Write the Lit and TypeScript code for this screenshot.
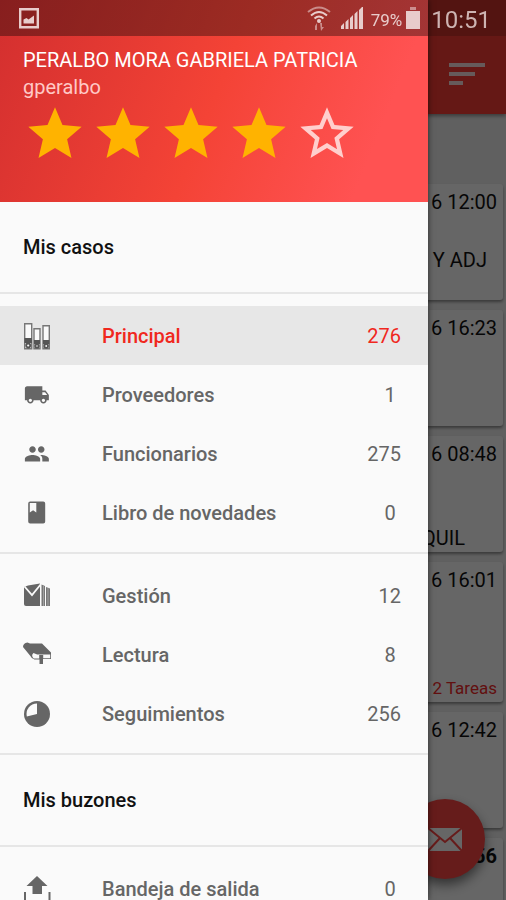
import { LitElement, html, css, svg, nothing } from "lit";
import { customElement, property } from "lit/decorators.js";
import { classMap } from "lit/directives/class-map.js";

const icons: Record<string, unknown> = {
  binders: svg`<g fill="#fafafa" stroke="#777" stroke-width="1.400">
    <path d="M1.700 1.700h7v25h-7zM11 6.700h6v20h-6zM20 3.700h6.300v23H20z"/></g>
    <path fill="#555" d="M1.500 16h7.400v5H1.500zM11 18h6v4h-6zM20 18h6.300v4H20z"/>
    <g fill="none" stroke="#555" stroke-width="1.800"><circle cx="5.200" cy="23.500" r="2"/><circle cx="14" cy="24" r="1.700"/><circle cx="23.200" cy="24" r="1.800"/></g>`,
  truck: svg`<path transform="translate(.8 .8) scale(1.090)" fill="#666" d="M20 8h-3V4H3c-1.100 0-2 .9-2 2v11h2c0 1.660 1.340 3 3 3s3-1.340 3-3h6c0 1.660 1.340 3 3 3s3-1.340 3-3h2v-5l-3-4zM6 18.500c-.83 0-1.500-.67-1.500-1.500s.67-1.500 1.500-1.500 1.500.67 1.500 1.500-.67 1.500-1.500 1.500zm13.500-9l1.960 2.500H17V9.500h2.500zm-1.500 9c-.83 0-1.500-.67-1.500-1.500s.67-1.500 1.500-1.500 1.500.67 1.500 1.500-.67 1.500-1.500 1.500z"/>`,
  people: svg`<path transform="translate(.8 .8) scale(1.090)" fill="#666" d="M16 11c1.660 0 2.990-1.340 2.990-3S17.660 5 16 5s-3 1.340-3 3 1.340 3 3 3zm-8 0c1.660 0 2.990-1.340 2.990-3S9.660 5 8 5 5 6.340 5 8s1.340 3 3 3zm0 2c-2.330 0-7 1.170-7 3.500V19h14v-2.500c0-2.330-4.670-3.500-7-3.500zm8 0c-.29 0-.62.02-.97.05 1.160.84 1.970 1.970 1.970 3.450V19h6v-2.500c0-2.330-4.670-3.500-7-3.500z"/>`,
  book: svg`<path fill="#666" d="M7.200 2.500h13a2 2 0 0 1 2 2v18a2 2 0 0 1-2 2h-13a2 2 0 0 1-2-2v-18a2 2 0 0 1 2-2z"/><path fill="#fafafa" d="M6.800 4h6.500v9.500l-3.200-2.200-3.300 2.200z"/>`,
  mail: svg`<path fill="#666" d="M1 5l4-1.500L17 1.500v22.500H3q-2 0-2-2z"/><path fill="none" stroke="#fafafa" stroke-width="1.800" d="M1.500 4.500L9 13 18 2"/><path fill="#777" d="M18.500 2.500l3.500 1.500v20h-3.500zM23 5l4 1.500V24h-4z"/><path stroke="#aaa" stroke-width=".8" d="M20.500 4v20M25 6v18"/>`,
  reading: svg`<path fill="#666" d="M0 6q0-4 4.500-4.500L7 2.500h12L28.500 12v6H20v5h-3.500v-4.500h-5Q8 17 7 14.500z"/><path fill="#fafafa" d="M10.500 12q-2.800 2.500.2 5.500h5.500v-3.500h4v3.200h7V13.500h-13z"/>`,
  pie: svg`<circle cx="14" cy="14" r="13" fill="#666"/><path fill="#fafafa" d="M14 14V3.500A10.500 10.500 0 0 0 3.800 16.500z"/>`,
  outbox: svg`<path fill="#666" d="M14 1l10.500 10H19v8H9.500v-8H3.500zM1 17h2v8h22.500v-8h2v10H1z"/>`,
};

interface Item { icon: string; label: string; count: number; active?: boolean }

const cases: Item[] = [
  { icon: "binders", label: "Principal", count: 276, active: true },
  { icon: "truck", label: "Proveedores", count: 1 },
  { icon: "people", label: "Funcionarios", count: 275 },
  { icon: "book", label: "Libro de novedades", count: 0 },
];
const tracking: Item[] = [
  { icon: "mail", label: "Gestión", count: 12 },
  { icon: "reading", label: "Lectura", count: 8 },
  { icon: "pie", label: "Seguimientos", count: 256 },
];
const mailboxes: Item[] = [{ icon: "outbox", label: "Bandeja de salida", count: 0 }];

const STAR = "M12 17.270L18.180 21l-1.640-7.030L22 9.240l-7.190-.61L12 2 9.190 8.630 2 9.240l5.460 4.730L5.820 21z";
const STAR_OUTLINE = "M22 9.240l-7.190-.62L12 2 9.190 8.630 2 9.240l5.460 4.730L5.820 21 12 17.270 18.180 21l-1.630-7.030L22 9.240zM12 15.400l-3.760 2.270 1-4.280-3.320-2.880 4.380-.38L12 6.100l1.710 4.040 4.380.38-3.320 2.880 1 4.280L12 15.400z";

@customElement("status-bar")
class StatusBar extends LitElement {
  static styles = css`
    :host { display: flex; align-items: center; height: 36px; padding: 2px 15px 0 18px; box-sizing: border-box; color: #e8cccb; }
    svg { display: block; }
    .gap { flex: 1; }
    .wifi { margin-right: 9px; }
    .level { font-size: 17px; margin: 2px 3px 0 7px; }
    .clock { font-size: 24px; margin: 2px 0 0 10px; color: #cdb4b2; }
  `;
  render() {
    return html`
      <svg width="22" height="24" viewBox="0 0 22 24" aria-hidden="true"><path fill="none" stroke="currentColor" stroke-width="2.400" d="M2.200 2.200h17.600v18H2.200z"/><path fill="currentColor" d="M5.500 16.500v-4l3-1.500 2 1.500 5.500-4v8z"/></svg>
      <span class="gap"></span>
      <svg class="wifi" width="24" height="26" viewBox="0 0 24 26" aria-hidden="true"><g fill="none" stroke="currentColor" stroke-width="2"><path stroke-opacity=".6" d="M1 6q11-9 22 0"/><path d="M4 9.500q8-7 16 0M7.500 12.500q4.500-4 9 0"/></g><circle cx="12" cy="15" r="2" fill="currentColor"/><path opacity=".6" fill="currentColor" d="M8 20l2-3v7H8zM13 17h2v4h2l-3 4z"/></svg>
      <svg width="24" height="24" viewBox="0 0 24 24" aria-hidden="true"><path fill="currentColor" d="M1 19l3-3v6H1zM5.500 15l3-3v10h-3zM10 11l3-3v14h-3zM14.500 7l3-3v18h-3zM19 3l4-4v23h-4z"/></svg>
      <span class="level">79%</span>
      <svg width="16" height="24" viewBox="0 0 16 24" aria-hidden="true"><path fill="currentColor" d="M1 4h14v18H1z"/><path opacity=".6" fill="currentColor" d="M5 0h6v3H5z"/></svg>
      <span class="clock">10:51</span>`;
  }
}

@customElement("nav-list")
class NavList extends LitElement {
  @property({ attribute: false }) items: Item[] = [];
  static styles = css`
    :host { display: block; padding: 12px 0 10px; }
    ul { list-style: none; margin: 0; padding: 0; }
    .row { display: flex; align-items: center; height: 59px; padding: 0 27px 0 23px; color: #666; text-decoration: none; font-size: 20px; }
    .active { background: #e7e7e7; color: #f0281e; }
    .icon { display: block; flex: none; width: 28px; height: 28px; }
    .label { flex: 1; margin-left: 51px; font-weight: 500; white-space: nowrap; }
    .count { min-width: 22px; text-align: center; }
  `;
  render() {
    return html`<ul>${this.items.map((i) => html`<li>
      <a href="#" class=${classMap({ row: true, active: !!i.active })} aria-current=${i.active ? "page" : nothing}>
        <svg class="icon" viewBox="0 0 28 28" aria-hidden="true">${icons[i.icon]}</svg>
        <span class="label">${i.label}</span><span class="count">${i.count}</span>
      </a></li>`)}</ul>`;
  }
}

@customElement("case-card")
class CaseCard extends LitElement {
  @property() time = "";
  static styles = css`
    :host { display: flex; flex-direction: column; align-items: flex-end; box-sizing: border-box; flex: none; min-height: 116px; padding: 5px 6px 1px; background: #fff; border-radius: 3px; box-shadow: 0 2px 3px rgba(0, 0, 0, 0.4); font-size: 20px; line-height: 26px; color: #111; }
    :host([unread]) { font-weight: 700; }
  `;
  render() {
    return html`<time>${this.time}</time><slot></slot>`;
  }
}

@customElement("app-root")
class AppRoot extends LitElement {
  static styles = css`
    :host { display: block; position: relative; height: 100vh; overflow: hidden; background: #f0f0f0; font-family: Roboto, sans-serif; }
    button { border: 0; padding: 0; background: none; }
    svg { display: block; }
    .bar { display: flex; justify-content: flex-end; align-items: center; box-sizing: border-box; height: 114px; padding: 36px 20px 0; background: linear-gradient(rgba(0, 0, 0, 0.18) 36px, transparent 36px), #fd3d35; box-shadow: 0 2px 4px rgba(0, 0, 0, 0.4); }
    .cards { display: flex; flex-direction: column; gap: 10px; padding: 70px 3px 0; }
    .summary { margin: 32px 10px 0 0; }
    .city { margin: auto 32px 0 0; }
    .tall { min-height: 140px; }
    .tasks { margin-top: auto; font-size: 17px; color: #f52a2a; }
    .fab { position: absolute; right: 21px; bottom: 21px; display: grid; place-items: center; width: 80px; height: 80px; border-radius: 50%; background: #ff4644; box-shadow: 0 6px 12px rgba(0, 0, 0, 0.5); }
    .scrim { position: absolute; inset: 0; background: rgba(0, 0, 0, 0.6); }
    .drawer { position: absolute; inset: 0 78px 0 0; overflow-y: auto; scrollbar-width: none; background: #fafafa; box-shadow: 0 0 6px rgba(0, 0, 0, 0.6); }
    .status { position: absolute; inset: 0 0 auto; }
    .profile { box-sizing: border-box; height: 202px; padding: 46px 23px 0; background: linear-gradient(rgba(0, 0, 0, 0.36) 36px, transparent 36px), linear-gradient(112deg, #d32f2f, #f44336 50%, #ff5252 85%); color: #fff; }
    .name { margin: 0; font-size: 20px; line-height: 28px; font-weight: 400; white-space: nowrap; }
    .user { margin: 0; font-size: 20px; line-height: 26px; color: #ffc9c6; }
    .stars { display: flex; gap: 4px; margin-top: 2px; }
    .star { width: 64px; height: 64px; fill: #ffb300; }
    .empty { fill: #ffcfcd; }
    .title { display: flex; align-items: center; height: 90px; margin: 0; padding: 0 23px; font-size: 20px; font-weight: 500; color: #111; }
    .line { height: 2px; margin: 0; border: 0; background: #e6e6e6; }
  `;
  render() {
    return html`
      <header class="bar"><button aria-label="Ordenar"><svg width="38" height="24" viewBox="0 0 38 24"><path fill="#fff" fill-opacity=".85" d="M1 0h36v4H1zM1 9h26v4H1zM1 18h14v4H1z"/></svg></button></header>
      <main class="cards">
        <case-card time="6 12:00"><span class="summary">Y ADJ</span></case-card>
        <case-card time="6 16:23"></case-card>
        <case-card time="6 08:48"><span class="city">QUIL</span></case-card>
        <case-card class="tall" time="6 16:01"><span class="tasks">2 Tareas</span></case-card>
        <case-card time="6 12:42"></case-card>
        <case-card unread time="56"></case-card>
      </main>
      <button class="fab" aria-label="Nuevo mensaje"><svg width="36" height="25" viewBox="0 0 36 25"><path fill="#fff" d="M1 1h34v23H1z"/><path fill="none" stroke="#ff4644" stroke-width="2" d="M1 1l17 14L35 1M1 24l12-13M35 24L23 11"/></svg></button>
      <div class="scrim"></div>
      <aside class="drawer">
        <header class="profile">
          <p class="name">PERALBO MORA GABRIELA PATRICIA</p>
          <p class="user">gperalbo</p>
          <div class="stars" role="img" aria-label="4 de 5 estrellas">
            ${[1, 2, 3, 4, 5].map((n) => html`<svg class=${classMap({ star: true, empty: n > 4 })} viewBox="0 0 24 24"><path d=${n > 4 ? STAR_OUTLINE : STAR}/></svg>`)}
          </div>
        </header>
        <nav>
          <h2 class="title">Mis casos</h2>
          <hr class="line" />
          <nav-list .items=${cases}></nav-list>
          <hr class="line" />
          <nav-list .items=${tracking}></nav-list>
          <hr class="line" />
          <h2 class="title">Mis buzones</h2>
          <hr class="line" />
          <nav-list .items=${mailboxes}></nav-list>
        </nav>
      </aside>
      <status-bar class="status"></status-bar>`;
  }
}
